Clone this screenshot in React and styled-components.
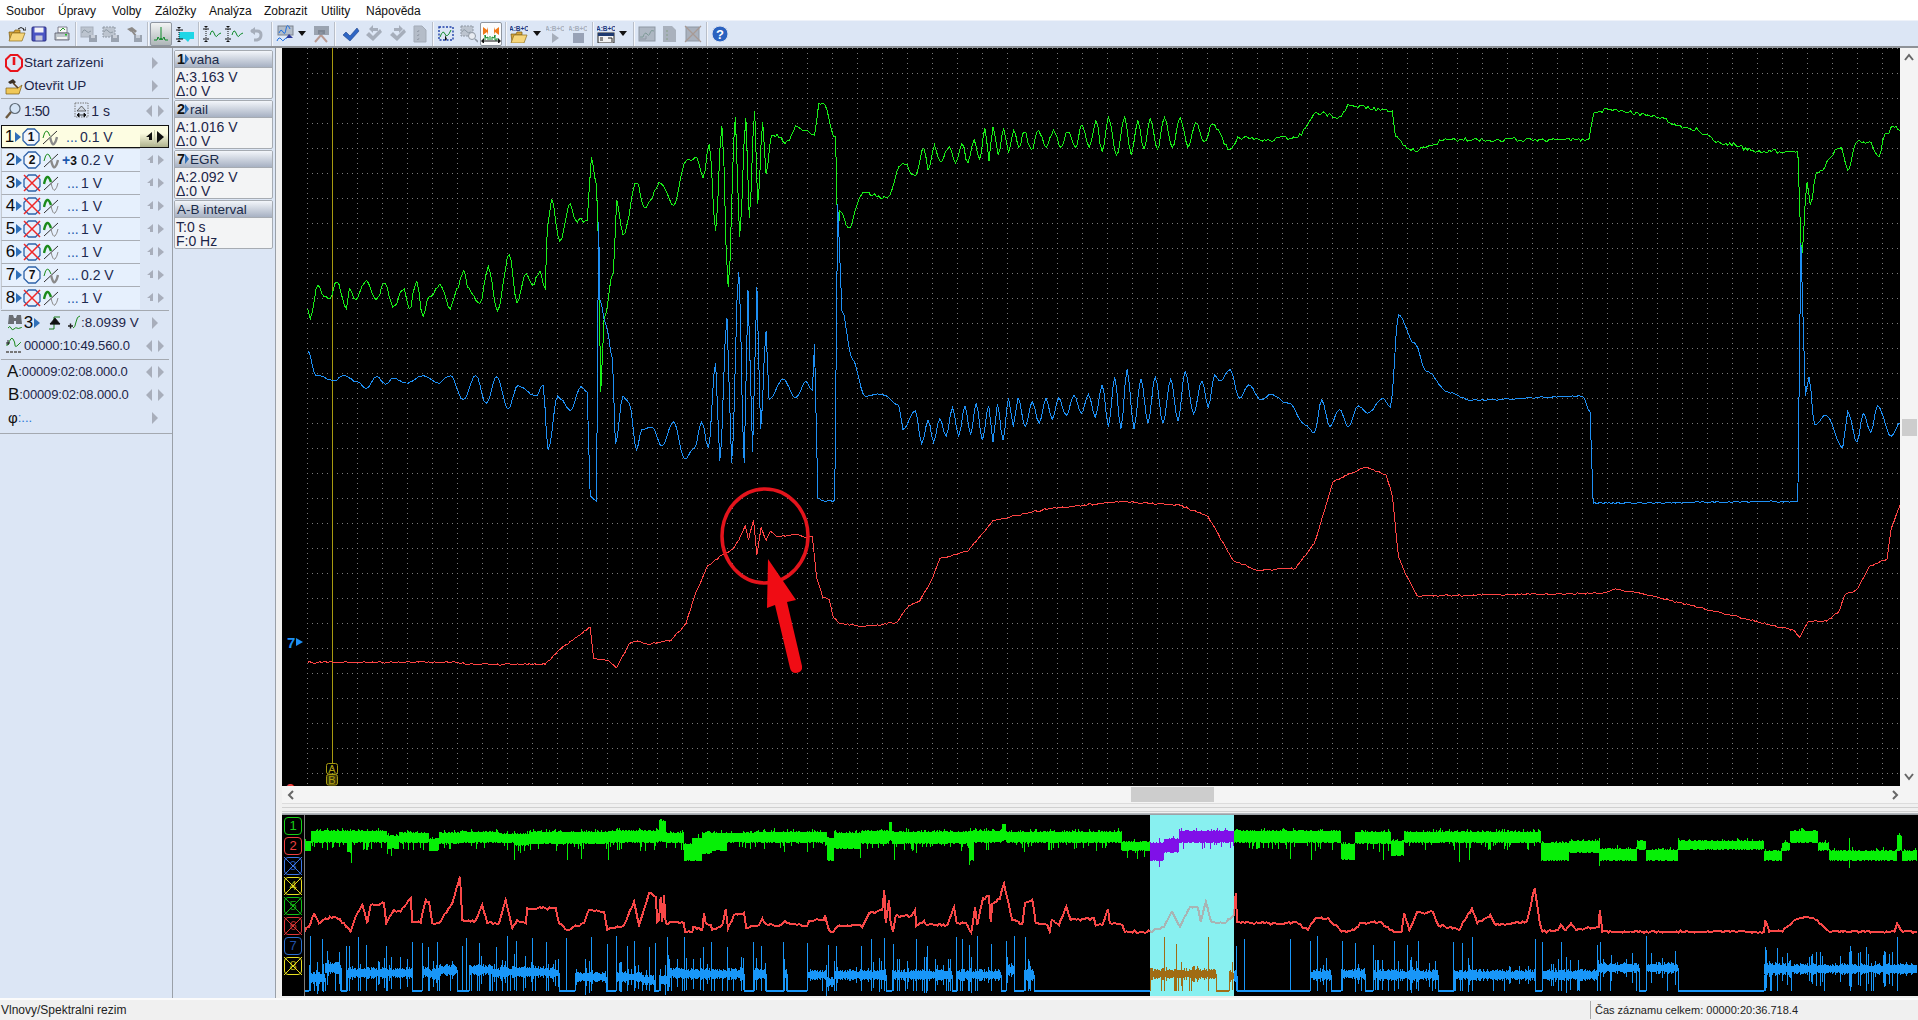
import React from 'react';
import styled, { createGlobalStyle } from 'styled-components';

const GlobalStyle = createGlobalStyle`
  html, body { margin: 0; padding: 0; height: 100%; overflow: hidden; background: #f0f0f0; }
  body { font-family: "Liberation Sans", Arial, sans-serif; color: #1c2548; }
  * { box-sizing: border-box; }
`;

const Page = styled.div`
  width: 1918px;
  height: 1020px;
  display: flex;
  flex-direction: column;
`;

const MenuBar = styled.div`
  height: 20px;
  background: white;
  display: flex;
  align-items: center;
  padding: 2px 0 0 6px;
  font-size: 12px;
  color: #111;
`;

const MenuItem = styled.span`
  width: ${p => p.$w}px;
`;

const Toolbar = styled.div`
  height: 28px;
  background: #dce6f5;
  border-bottom: 2px solid #8e9297;
  border-top: 1px solid #eef2f9;
  display: flex;
  align-items: center;
  padding-left: 5px;
`;

const ToolBtn = styled.div`
  width: ${p => p.$w}px;
  height: ${p => (p.$active ? 24 : 22)}px;
  margin-left: ${p => p.$ml || 0}px;
  flex-shrink: 0;
  display: flex;
  align-items: center;
  justify-content: center;
  border-radius: 2px;
  border: ${p => (p.$active ? '1px solid #8f96a0' : 'none')};
  background: ${p => (p.$active === 'dark' ? 'linear-gradient(#f2f4f4, #aeb6b8)' : p.$active ? '#fbfcfd' : 'transparent')};
  svg { flex-shrink: 0; }
`;

const ToolSep = styled.div`
  width: 2px;
  height: 24px;
  margin-left: ${p => p.$ml || 0}px;
  flex-shrink: 0;
  background: #b9bfc9;
  border-right: 1px solid #f5f7fb;
`;

const Main = styled.div`
  height: 950px;
  display: flex;
`;

const SidePanel = styled.div`
  width: 173px;
  flex-shrink: 0;
  background: #dce6f5;
  border-right: 1px solid #9aa0a8;
  padding-top: 3px;
  display: flex;
  flex-direction: column;
`;

const PanelRow = styled.div`
  height: 23px;
  display: flex;
  align-items: center;
  padding-left: ${p => p.$pl ?? 5}px;
  font-size: 13px;
  white-space: nowrap;
`;

const Spacer = styled.div`
  flex: 1;
`;

const Divider = styled.div`
  height: 1px;
  margin: ${p => p.$top || 0}px ${p => p.$right ?? 3}px 0 ${p => (p.$right === 0 ? 0 : 1)}px;
  background: #a4a9b0;
`;

const Label = styled.span`
  font-size: ${p => p.$size || 13}px;
  font-weight: ${p => (p.$bold ? 700 : 400)};
  color: ${p => p.$color || '#1c2548'};
  margin-left: ${p => p.$ml || 0}px;
  letter-spacing: ${p => p.$track || 0}px;
`;

const RowEnd = styled.div`
  width: 30px;
  margin-right: 2px;
  display: flex;
  justify-content: center;
  align-items: center;
`;

const ChannelList = styled.div`
  margin-top: 3px;
  display: flex;
  flex-direction: column;
`;

const ChannelRow = styled.div`
  height: 23px;
  width: 168px;
  margin-left: 1px;
  display: flex;
  align-items: stretch;
  ${p => p.$active && `
    outline: 1px solid #111;
    outline-offset: -1px;
    border: 1px solid #111;
    background: #fdfde2;
  `}
`;

const ChannelBody = styled.div`
  width: ${p => (p.$active ? 138 : 139)}px;
  display: flex;
  align-items: center;
  padding-left: ${p => (p.$active ? 2 : 3)}px;
  white-space: nowrap;
  ${p => !p.$active && `
    background: #e6f0fd;
    border-top: 1px solid #a9aeb6;
    border-left: 1px solid #c4c9d0;
  `}
`;

const ChannelButtons = styled.div`
  flex: 1;
  display: flex;
  align-items: center;
  justify-content: center;
  ${p => p.$active && `background: linear-gradient(#fbfbe0 35%, #aeb28e);`}
`;

const NumSlot = styled.span`
  width: 11px;
  font-size: 17px;
  color: #0b0b0b;
  text-align: center;
`;

const ValueSlot = styled.span`
  font-size: 14px;
  color: #1c2a50;
`;

const DotSlot = styled.span`
  width: 22px;
  padding-left: ${p => p.$pl}px;
  font-size: 14px;
  color: #1b58ae;
  white-space: nowrap;
`;

const CardPanel = styled.div`
  width: 103px;
  flex-shrink: 0;
  background: #dce6f5;
  border-right: 1px solid #9aa0a8;
  padding: 2px 2px 0 1px;
  display: flex;
  flex-direction: column;
  gap: 1px;
`;

const Card = styled.div`
  height: 49px;
  border: 1px solid #a6abb2;
  border-radius: 2px;
  background: #f3f4f5;
  overflow: hidden;
`;

const CardHeader = styled.div`
  height: 17px;
  display: flex;
  align-items: center;
  padding-left: 2px;
  font-size: 13.5px;
  color: #1b2b4a;
  background: linear-gradient(#f3f6fb, #a7b1c3);
  border-bottom: 1px solid #a6abb2;
`;

const CardBody = styled.div`
  padding: 2px 0 0 1px;
  font-size: 14px;
  line-height: 14px;
  color: #1c2548;
`;

const CardLine = styled.div`
  white-space: nowrap;
`;

const Gutter = styled.div`
  width: 6px;
  flex-shrink: 0;
  background: #f0f0f0;
`;

const RightColumn = styled.div`
  flex: 1;
  min-width: 0;
  display: flex;
  flex-direction: column;
`;

const PlotRow = styled.div`
  height: 738px;
  display: flex;
`;

const PlotSvg = styled.svg`
  display: block;
  width: 1618px;
  height: 738px;
  background: #000;
`;

const VScroll = styled.div`
  width: 18px;
  background: #f4f4f4;
  display: flex;
  flex-direction: column;
  align-items: center;
`;

const VThumb = styled.div`
  width: 15px;
  height: 17px;
  margin-top: 353px;
  background: #cdcdcd;
`;

const ScrollCap = styled.div`
  height: 18px;
  display: flex;
  align-items: center;
  justify-content: center;
  flex-shrink: 0;
`;

const HScroll = styled.div`
  height: 18px;
  background: #f4f4f4;
  display: flex;
  align-items: center;
  padding: 0 18px 0 4px;
  border-bottom: 1px solid #dcdcdc;
`;

const HThumb = styled.div`
  width: 83px;
  height: 15px;
  margin-left: 835px;
  background: #cdcdcd;
`;

const Splitter = styled.div`
  height: 11px;
  background: #f0f0f0;
  border-top: 3px solid #f0f0f0;
  &::before {
    content: '';
    display: block;
    height: 3px;
    border: 1px solid #d0d0d0;
    border-width: 1px 0;
  }
  &::after {
    content: '';
    display: block;
    height: 3px;
    margin-top: 1px;
    background: linear-gradient(#c0c4c8, #7a7e84);
  }
`;

const Overview = styled.div`
  height: 181px;
  display: flex;
  background: #000;
`;

const LabelColumn = styled.div`
  width: 23px;
  flex-shrink: 0;
  padding: 2px 0 0 2px;
  border-right: 1px solid #7c7c7c;
  display: flex;
  flex-direction: column;
  gap: 2px;
`;

const TraceLabel = styled.div`
  width: 18px;
  height: 18px;
  border: 1px solid ${p => p.$color};
  border-radius: 4px;
  color: ${p => p.$text};
  font-size: 13px;
  line-height: 16px;
  text-align: center;
  position: relative;
  svg { position: absolute; inset: -1px; }
`;

const OverviewSvg = styled.svg`
  display: block;
  width: 1612px;
  height: 181px;
`;

const StatusBar = styled.div`
  height: 22px;
  background: #f0f0f0;
  border-top: 2px solid #fbfbfb;
  display: flex;
  align-items: center;
  font-size: 12px;
  color: #222;
`;

const StatusLeft = styled.div`
  width: 1590px;
  padding-left: 1px;
`;

const StatusRight = styled.div`
  flex: 1;
  height: 18px;
  font-size: 11px;
  line-height: 18px;
  padding-left: 4px;
  border-left: 1px solid #a8a8a8;
`;

/* ---------- icons ---------- */

const Ico = ({ w = 18, h = 18, children }) => (
  <svg width={w} height={h} viewBox={`0 0 ${w} ${h}`}>{children}</svg>
);

const GRAY = '#a6aebb';
const abText = (color) => (
  <text x="9" y="6" fontSize="6.5" fontWeight="700" textAnchor="middle" fill={color} fontFamily="Liberation Sans">A:B+C</text>
);

const FolderIcon = () => (
  <g>
    <path d="M1 7h5l1-2h5v3H5L2 15z" fill="#d9a83a" stroke="#7a5a14" strokeWidth=".7" />
    <path d="M4 8h13l-3 8H1z" fill="#f6d67c" stroke="#8a6a1c" strokeWidth=".7" />
  </g>
);

const Open = () => (
  <Ico><FolderIcon /><path d="M10 4q3-3 6 0l-1 1h3V2" fill="none" stroke="#222" strokeWidth="1" /></Ico>
);
const Save = () => (
  <Ico w={16}>
    <rect x="1" y="2" width="14" height="14" rx="1" fill="#4a55c4" stroke="#2a2f80" />
    <rect x="3.5" y="2.5" width="9" height="5" fill="#f2f2f6" />
    <rect x="4.5" y="10.5" width="7" height="5" fill="#c6c8d8" />
  </Ico>
);
const Print = () => (
  <Ico>
    <path d="M5 2h9v6H5z" fill="#f8f8f8" stroke="#667" strokeWidth=".8" />
    <path d="M7 6l3-3 2 2" fill="none" stroke="#2a9a2a" />
    <path d="M2 8h14v7H2z" fill="#bfc6cc" stroke="#556" strokeWidth=".8" />
    <rect x="4" y="12" width="10" height="2" fill="#f4f4f4" />
    <rect x="12" y="9" width="2" height="1.5" fill="#22c022" />
  </Ico>
);
const GrayCopy = () => (
  <Ico>
    <rect x="1" y="2" width="12" height="10" fill="#bcc4cf" stroke={GRAY} />
    <path d="M2 8q2-5 4-2t5 0" fill="none" stroke="#8f9ba6" />
    <rect x="9" y="10" width="8" height="7" fill="#9aa3b0" />
    <rect x="11" y="10" width="4" height="3" fill="#c8ced8" />
  </Ico>
);
const GrayCopyDashed = () => (
  <Ico>
    <rect x="1" y="2" width="12" height="10" fill="#bcc4cf" stroke="#8f98a4" strokeDasharray="2 1" />
    <path d="M2 7q2-4 4-1t5 1" fill="none" stroke="#8f9ba6" />
    <rect x="9" y="10" width="8" height="7" fill="#9aa3b0" />
    <rect x="11" y="10" width="4" height="3" fill="#c8ced8" />
  </Ico>
);
const GrayHammer = () => (
  <Ico>
    <path d="M2 4l5-2 5 4-2 2-2-2-2 1z" fill="#8d8a88" />
    <path d="M7 6l4 5" stroke="#8d8a88" strokeWidth="2" />
    <rect x="9" y="10" width="8" height="7" fill="#9aa3b0" />
    <rect x="11" y="10" width="4" height="3" fill="#c8ced8" />
  </Ico>
);
const Spectrum = () => (
  <Ico>
    <path d="M9 2v13" stroke="#0e8a2a" strokeWidth="1" />
    <path d="M2 15h3l1-3 2 3 1-2 1 2 2-3 1 3h3" fill="none" stroke="#0e8a2a" />
  </Ico>
);
const CyanCursor = () => (
  <Ico w={20}>
    <rect x="4" y="7" width="15" height="7" fill="#1fd6e6" />
    <path d="M10 14l3 3 2-3" fill="#1fd6e6" />
    <path d="M1 5h7M1 14h7" stroke="#111" />
    <path d="M2 2l2 2 2-2zM2 17l2-2 2 2z" fill="#111" />
    <path d="M4 5v9" stroke="#111" strokeDasharray="1 1" />
  </Ico>
);
const CursorWave = () => (
  <Ico w={20}>
    <path d="M1 4h6M1 14h6" stroke="#111" />
    <path d="M2 1l2 2 2-2zM2 17l2-2 2 2z" fill="#111" />
    <path d="M4 4v10" stroke="#111" strokeDasharray="1 1" />
    <path d="M8 10q2-7 4-2t3 3 4-3" fill="none" stroke="#0e8a2a" />
  </Ico>
);
const Undo = () => (
  <Ico w={14}>
    <path d="M2 6h6q4 0 4 4t-4 5H5" fill="none" stroke={GRAY} strokeWidth="3" />
    <path d="M1 6l5-4v8z" fill={GRAY} />
  </Ico>
);
const ChartArrow = () => (
  <Ico>
    <rect x="2" y="1" width="15" height="9" fill="#b3bdc9" stroke="#7c8490" />
    <path d="M3 8q2-5 4-1t3-3 4 0" fill="none" stroke="#1f6fe0" />
    <path d="M1 16q2-5 4-2t3 1 3-2" fill="none" stroke="#1f6fe0" />
    <path d="M10 13l3-4 4 4z" fill="#2b3a9a" />
  </Ico>
);
const Caret = () => <Ico w={10} h={6}><path d="M1 0h8L5 5z" fill="#111" /></Ico>;
const ChartCross = () => (
  <Ico>
    <rect x="2" y="1" width="15" height="9" fill="#9aa3b0" />
    <path d="M6 5h7v4H6z" fill="#7e8794" />
    <path d="M3 17l6-7 6 7" fill="none" stroke="#b89a92" strokeWidth="2" />
    <path d="M9 10V7" stroke="#8a93a0" strokeWidth="3" />
  </Ico>
);
const Check = () => (
  <Ico>
    <path d="M1 10l3-3 4 4 7-8 2 3-9 10z" fill="#2e66c4" stroke="#1d3f86" strokeWidth=".6" />
  </Ico>
);
const CheckGray = ({ flip }) => (
  <Ico>
    <path d="M1 10l3-3 4 4 7-7 2 3-9 9z" fill={GRAY} />
    <path d={flip ? 'M5 3h5V0l4 4-4 4V6H5z' : 'M13 3H8V0L4 4l4 4V6h5z'} fill={GRAY} />
  </Ico>
);
const CheckGrayFlip = () => <CheckGray flip />;
const DocGray = () => (
  <Ico w={14}>
    <path d="M1 1h8l4 4v12H1z" fill="#b4bcc8" stroke="#a3abb7" />
    <path d="M4 6l1 1 1-2M4 10l1 1 1-2M4 14l1 1 1-2" stroke="#8e96a2" fill="none" strokeWidth=".8" />
  </Ico>
);
const DottedChart = () => (
  <Ico>
    <rect x="2" y="2" width="14" height="13" fill="none" stroke="#1e3fa8" strokeDasharray="2 1.5" strokeWidth="1.4" />
    <path d="M3 12q3-8 5-3t6-4" fill="none" stroke="#0e8a2a" />
    <path d="M8 10v6l2-2z" fill="#111" />
  </Ico>
);
const MagnifyChart = () => (
  <Ico>
    <rect x="1" y="1" width="12" height="10" fill="#bcc4cf" stroke="#8f98a4" strokeDasharray="2 1" />
    <path d="M2 7q2-4 4-1t5 1" fill="none" stroke="#8f9ba6" />
    <circle cx="12" cy="11" r="3.5" fill="#e8ecf2" stroke="#8f98a4" />
    <path d="M15 14l3 3" stroke="#8f98a4" strokeWidth="1.6" />
  </Ico>
);
const OrangeSpectrum = () => (
  <Ico w={20}>
    <path d="M2 2l4 3 1-3v8l-1-3-4 3zM18 2l-4 3-1-3v8l1-3 4 3z" fill="#f07818" />
    <path d="M4 15V10l1 3 2-1v3M9 15v-4M11 15v-3l2 1 1-3v5h2v-2" fill="none" stroke="#0e8a2a" />
    <path d="M2 16h16" stroke="#111" />
    <path d="M0 16l3-3v6zM20 16l-3-3v6z" fill="#111" />
  </Ico>
);
const AbFolder = () => (
  <Ico>
    {abText('#1e3a80')}
    <g transform="translate(0 2)"><FolderIcon /></g>
  </Ico>
);
const AbPlay = () => (
  <Ico>{abText(GRAY)}<path d="M6 8l7 5-7 5z" fill={GRAY} /></Ico>
);
const AbStop = () => (
  <Ico>{abText(GRAY)}<rect x="4" y="8" width="11" height="10" fill="#98a2b6" /></Ico>
);
const AbWindow = () => (
  <Ico>
    {abText('#1e3a80')}
    <rect x="1" y="8" width="16" height="10" fill="#f3f3f3" stroke="#222" />
    <rect x="1" y="8" width="16" height="3" fill="#1e3a70" />
    <path d="M3 13h3M3 15h3M11 13h4v4" stroke="#222" fill="none" />
  </Ico>
);
const GrayChart = () => (
  <Ico>
    <rect x="1" y="2" width="16" height="14" fill="#aeb7c3" stroke="#8e97a3" />
    <path d="M2 12h3q2-6 4-3t3-1 4-2" fill="none" stroke="#7f9a98" />
    <path d="M2 14h6v-3" fill="none" stroke="#8e97a3" />
  </Ico>
);
const GrayDoc = () => (
  <Ico w={14}>
    <path d="M0 1h9l4 4v12H0z" fill="#a9b1bd" />
    <path d="M4 5v2M4 9v2M4 13v2" stroke="#87a088" strokeWidth="1" />
  </Ico>
);
const GrayX = () => (
  <Ico>
    <rect x="2" y="2" width="13" height="14" fill="#a9b1bd" stroke="#8e97a3" />
    <path d="M1 1l16 16M17 1L1 17" stroke="#a89a94" strokeWidth="1.2" />
  </Ico>
);
const Help = () => (
  <Ico>
    <circle cx="9" cy="9" r="8" fill="#2a62c0" stroke="#d8e0ee" />
    <text x="9" y="13.5" fontSize="13" fontWeight="700" textAnchor="middle" fill="white" fontFamily="Liberation Sans">?</text>
  </Ico>
);

const Power = () => (
  <Ico>
    <path d="M5.5 1h7L17 5.5v7L12.5 17h-7L1 12.5v-7z" fill="none" stroke="#e8141c" strokeWidth="2" />
    <path d="M9 3v8" stroke="#e8141c" strokeWidth="2.6" />
  </Ico>
);
const HammerFolder = () => (
  <Ico>
    <path d="M1 11h12l4-3-3 9H1z" fill="#f0c858" stroke="#7a5a14" strokeWidth=".7" />
    <path d="M3 5l5-3 3 3-2 2-1-1-3 1z" fill="#3a3026" />
    <path d="M8 6l5 5" stroke="#5a4020" strokeWidth="1.6" />
  </Ico>
);
const Magnifier = () => (
  <Ico>
    <circle cx="11" cy="6.5" r="5" fill="#d4e4f6" stroke="#5f6b78" strokeWidth="1.2" />
    <path d="M7 10l-5 6" stroke="#6d5a40" strokeWidth="2.4" />
  </Ico>
);
const ZoomWidth = () => (
  <Ico w={16}>
    <rect x="1" y="1" width="13" height="14" fill="none" stroke="#777" strokeDasharray="1.5 1" />
    <path d="M3 9h9L7.5 4z" fill="#cfd6df" stroke="#333" strokeWidth=".7" />
    <path d="M3 13h9M3 13l2-2v4zM12 13l-2-2v4z" stroke="#111" fill="#111" strokeWidth=".8" />
  </Ico>
);
const Play = ({ color = '#2f6fb8', s = 7 }) => (
  <Ico w={s} h={10}>
    <path d={`M0 0l${s - 1} 5-${s - 1} 5z`} fill={color} />
  </Ico>
);
const ChevronArrow = ({ color = '#a8aebb' }) => (
  <Ico w={7} h={12}><path d="M0 0l6 6-6 6z" fill={color} /></Ico>
);
const NavArrows = ({ color = '#a8aebb' }) => (
  <Ico w={20} h={12}>
    <path d="M7 0L1 6l6 6zM13 0l6 6-6 6z" fill={color} />
  </Ico>
);
const ChannelNav = ({ active }) => {
  const c = active ? '#111' : '#a8aebb';
  return (
    <Ico w={22} h={14}>
      <path d="M9 2L3 7l3 0v3h3z" fill={c} />
      <path d={active ? 'M14 1l7 6-7 6z' : 'M14 2l6 5-6 5z'} fill={c} />
      {active && <path d="M11.5 0v14" stroke="#c8ccb0" />}
    </Ico>
  );
};
const Octagon = ({ n, off }) => (
  <Ico>
    <path d="M5.5 1h7L17 5.5v7L12.5 17h-7L1 12.5v-7z" fill={off ? 'none' : '#f2f6fc'} stroke="#2e62a8" strokeWidth="1.3" />
    {off ? (
      <path d="M1 1l16 16M17 1L1 17" stroke="#f02828" strokeWidth="1.5" />
    ) : (
      <text x="9" y="13.2" fontSize="12" fontWeight="700" textAnchor="middle" fill="#111" fontFamily="Liberation Sans">{n}</text>
    )}
  </Ico>
);
const WaveToggle = ({ off }) => (
  <Ico w={16}>
    <path d="M1 16L15 3" stroke="#333" strokeWidth="1" />
    <path d="M1 10Q4-3 8 8" fill="none" stroke="#1a8a1a" strokeWidth={off ? 2.4 : 1} />
    <path d="M8 9q2 9 4 7t3-7" fill="none" stroke="#8a8a8a" strokeWidth={off ? 1 : 2.4} />
  </Ico>
);
const Binoculars = () => (
  <Ico w={16} h={20}>
    <path d="M2 2h4l1 3h2l1-3h4l1 9H9V8H7v3H1z" fill="#6a6e74" />
    <path d="M1 15q2-3 3 0t3 1 3-1 3 0 2 0" fill="none" stroke="#1a8a1a" />
  </Ico>
);
const TriggerEdge = () => (
  <Ico w={14} h={16}>
    <path d="M1 14h5V2h6" fill="none" stroke="#1a7a1a" />
    <path d="M2 9h10M7 3L2 9h10z" fill="#111" stroke="#111" strokeWidth=".8" />
  </Ico>
);
const SlopeIcon = () => (
  <Ico w={14} h={16}>
    <path d="M1 11h5M3.5 8.5v5" stroke="#222" strokeWidth="1.4" />
    <path d="M6 13q2 0 3-6t4-6" fill="none" stroke="#1a8a1a" />
  </Ico>
);
const PulseIcon = () => (
  <Ico w={18} h={20}>
    <path d="M1 9h2q3-9 5-6t2 6 3 0 3-3" fill="none" stroke="#1a8a1a" />
    <path d="M3 4v5M1 7h4" stroke="#222" />
    <path d="M1 16h16" stroke="#777" strokeWidth="2" strokeDasharray="3 1" />
  </Ico>
);

/* ---------- trace data, in page pixels ---------- */

const random = (seed) => () => {
  seed = (seed * 16807) % 2147483647;
  return seed / 2147483647;
};

const leftPlot = ([x, y]) => [280 + x / 2.376, 100 + y / 2.703];
const rightPlot = ([x, y]) => [940 + x / 1.603, 90 + y / 2.613];
const ovA = ([x, y]) => [270 + x / 3, 760 + y / 3];
const ovB = ([x, y]) => [660 + x / 3, 810 + y / 3];
const ovC = ([x, y]) => [1100 + x / 1.917, 780 + y / 3];

// alternates peak and trough rows into one zig-zag
const zigzag = (xs, peaks, troughs) => {
  const out = [];
  xs.forEach((x, i) => {
    out.push([x, peaks[i]]);
    if (i < xs.length - 1) out.push([(x + xs[i + 1]) / 2, troughs[i]]);
  });
  return out;
};

const greenLeft = [[66, 565], [72, 592], [90, 500], [100, 525], [118, 538], [135, 492], [158, 565], [165, 510], [180, 540], [205, 488], [228, 540], [250, 495], [268, 560], [295, 510], [307, 565], [325, 490], [340, 585], [355, 530], [380, 497], [405, 565], [420, 510], [437, 460], [445, 505], [475, 550], [495, 450], [517, 570], [545, 418], [563, 548], [585, 470], [600, 500], [618, 462], [630, 508], [635, 350], [645, 268], [665, 382], [690, 280], [702, 325], [730, 325], [740, 155], [752, 230], [757, 400], [762, 790], [770, 590], [792, 470], [800, 270], [815, 365], [848, 225], [865, 290], [905, 225], [935, 285], [965, 165], [990, 155], [1005, 210], [1020, 120], [1035, 355], [1050, 70], [1065, 505], [1082, 45], [1092, 370], [1107, 50], [1115, 320], [1128, 30], [1135, 280], [1147, 60], [1155, 200], [1168, 95], [1190, 100], [1200, 118], [1230, 72], [1270, 95], [1280, 10], [1290, 8], [1320, 100], [1325, 370], [1330, 300], [1350, 345], [1385, 250], [1440, 265], [1480, 170], [1510, 205], [1530, 130], [1540, 190], [1555, 122], [1568, 165]];
const greenRight = [
  ...zigzag(
    [15, 35, 55, 72, 85, 102, 118, 135, 158, 182, 205, 228, 250, 270, 296, 317, 337, 360, 385, 410, 437],
    [148, 140, 130, 100, 98, 100, 105, 110, 105, 105, 110, 92, 80, 72, 70, 78, 75, 72, 72, 85, 90],
    [190, 190, 180, 185, 170, 165, 150, 155, 150, 150, 150, 150, 160, 170, 170, 155, 155, 150, 150, 135],
  ),
  [465, 155], [480, 125], [520, 130], [570, 125], [605, 60], [640, 70], [657, 40], [725, 55], [730, 120], [755, 158], [820, 130], [1040, 130], [1048, 60], [1075, 50], [1135, 65], [1200, 100], [1260, 140], [1310, 160], [1375, 160], [1378, 300], [1381, 440], [1390, 240], [1395, 300], [1405, 215], [1445, 150], [1455, 210], [1470, 135], [1490, 135], [1505, 175], [1515, 115], [1530, 97], [1539, 105],
];
const blueLeft = [[66, 678], [85, 745], [130, 758], [150, 745], [185, 762], [205, 780], [230, 748], [250, 768], [270, 752], [300, 765], [340, 745], [375, 765], [405, 745], [435, 810], [465, 745], [490, 820], [515, 748], [542, 835], [565, 772], [610, 800], [625, 770], [637, 945], [660, 800], [668, 810], [690, 840], [715, 775], [730, 790], [737, 1070], [752, 1085], [757, 330], [760, 540], [775, 610], [790, 700], [797, 930], [815, 800], [830, 820], [847, 945], [860, 890], [885, 885], [907, 935], [935, 870], [962, 970], [985, 940], [1002, 870], [1018, 940], [1035, 710], [1045, 975], [1062, 590], [1073, 980], [1090, 465], [1103, 980], [1112, 515], [1123, 950], [1133, 505], [1142, 890], [1155, 625], [1162, 810], [1195, 755], [1225, 805], [1250, 760], [1265, 785], [1270, 660], [1278, 1075], [1290, 1083], [1318, 1083], [1325, 280], [1335, 570], [1360, 700], [1390, 800], [1430, 795], [1470, 825], [1480, 890], [1510, 840], [1525, 930], [1540, 865], [1553, 925], [1568, 860]];
const blueRight = [
  [0, 860], [10, 905],
  ...zigzag(
    [20, 40, 58, 78, 92, 110, 125, 148, 170, 190, 215, 238, 260, 280, 300, 322, 345, 370, 393, 420, 440],
    [830, 825, 818, 825, 820, 805, 805, 815, 805, 805, 798, 795, 770, 750, 730, 755, 750, 755, 735, 760, 745],
    [905, 900, 915, 920, 915, 880, 880, 870, 860, 850, 845, 855, 880, 885, 885, 870, 870, 865, 845, 830],
  ),
  [450, 760], [465, 730], [480, 805], [495, 770], [515, 810], [530, 795], [560, 820], [585, 875], [600, 895], [612, 810], [625, 880], [640, 835], [655, 880], [670, 825], [685, 845], [710, 805], [722, 830], [735, 587], [760, 660], [780, 735], [815, 790], [850, 810], [1030, 800], [1042, 840], [1047, 1080], [1375, 1075], [1380, 400], [1387, 800], [1393, 750], [1402, 875], [1420, 850], [1447, 935], [1455, 840], [1470, 920], [1480, 845], [1492, 895], [1503, 825], [1525, 905], [1539, 870],
];
const redLeft = [[66, 1520], [420, 1520], [450, 1525], [630, 1525], [660, 1490], [700, 1455], [737, 1425], [745, 1510], [780, 1515], [800, 1535], [830, 1470], [850, 1462], [875, 1472], [930, 1460], [965, 1415], [985, 1340], [1015, 1260], [1050, 1230], [1075, 1215], [1090, 1190], [1105, 1150], [1113, 1190], [1125, 1135], [1133, 1230], [1143, 1155], [1155, 1190], [1165, 1165], [1180, 1180], [1225, 1175], [1250, 1182], [1265, 1180], [1275, 1290], [1290, 1345], [1305, 1350], [1315, 1400], [1330, 1415], [1390, 1423], [1465, 1412], [1495, 1365], [1520, 1355], [1545, 1305], [1568, 1240]];
const redRight = [[0, 1225], [45, 1205], [85, 1125], [170, 1095], [290, 1075], [385, 1085], [430, 1115], [470, 1230], [510, 1255], [570, 1250], [600, 1185], [630, 1025], [680, 985], [715, 1005], [725, 1060], [735, 1220], [745, 1260], [765, 1322], [1060, 1315], [1080, 1305], [1110, 1310], [1370, 1413], [1378, 1430], [1392, 1388], [1422, 1388], [1442, 1360], [1450, 1320], [1470, 1305], [1490, 1245], [1518, 1225], [1525, 1145], [1539, 1085]];

// fills a key point list in with short steps and a bit of signal noise
const traceLine = (points, { noise, seed, step = 2, smooth }) => {
  const rnd = random(seed);
  let d = `M${points[0][0].toFixed(1)} ${points[0][1].toFixed(1)}`;
  for (let i = 1; i < points.length; i++) {
    const [x0, y0] = points[i - 1];
    const [x1, y1] = points[i];
    const n = Math.max(1, Math.round((x1 - x0) / step));
    for (let k = 1; k <= n; k++) {
      const t = k / n;
      const e = smooth ? (1 - Math.cos(t * Math.PI)) / 2 : t;
      const jitter = k < n ? (rnd() - 0.5) * noise : 0;
      d += `L${(x0 + (x1 - x0) * t).toFixed(1)} ${(y0 + (y1 - y0) * e + jitter).toFixed(1)}`;
    }
  }
  return d;
};

const greenPlot = traceLine([...greenLeft.map(leftPlot), ...greenRight.map(rightPlot)], { noise: 4, seed: 11, smooth: true });
const bluePlot = traceLine([...blueLeft.map(leftPlot), ...blueRight.map(rightPlot)], { noise: 1.4, seed: 23, smooth: true });
const redPlot = traceLine([...redLeft.map(leftPlot), ...redRight.map(rightPlot)], { noise: 1.6, seed: 37 });

const greenSegs = [
  [306, 312, 840, 850], [312, 348, 830, 842], [348, 353, 830, 852], [353, 388, 830, 842], [388, 400, 835, 848], [400, 430, 832, 842], [430, 440, 838, 850], [440, 462, 832, 843], [462, 500, 831, 842], [500, 515, 833, 842], [515, 530, 833, 845], [530, 610, 831, 843], [610, 660, 830, 842],
  [660, 667, 820, 841], [667, 685, 832, 842], [685, 693, 843, 860], [693, 703, 837, 860], [703, 713, 832, 853], [713, 728, 832, 850], [728, 757, 832, 842], [757, 828, 831, 842], [828, 835, 837, 860], [835, 862, 832, 848], [862, 890, 830, 843], [890, 893, 822, 840], [893, 970, 831, 843], [970, 975, 830, 860], [975, 1003, 830, 842], [1003, 1007, 823, 840], [1007, 1123, 831, 842], [1123, 1151, 841, 850],
  [1151, 1165, 842, 860], [1165, 1180, 838, 852], [1180, 1342, 830, 842], [1342, 1356, 843, 859], [1356, 1392, 831, 843], [1392, 1405, 840, 855], [1405, 1542, 831, 842], [1542, 1570, 842, 860], [1570, 1600, 840, 852], [1600, 1638, 848, 860], [1638, 1647, 840, 849], [1647, 1679, 849, 860], [1679, 1765, 840, 849], [1765, 1783, 850, 860], [1783, 1791, 842, 850], [1791, 1819, 830, 842], [1819, 1830, 842, 850], [1830, 1898, 850, 860], [1898, 1903, 835, 850], [1903, 1918, 850, 860],
];
const greenSpikes = [[352, 863], [323, 848], [367, 850], [388, 851], [424, 850], [515, 860], [568, 860], [582, 859], [609, 860], [785, 852], [808, 852], [861, 858], [895, 860], [917, 853], [970, 865], [1025, 852], [1050, 850], [1160, 867], [1291, 859], [1312, 860], [1384, 860], [1380, 852], [1460, 862], [1470, 860], [1600, 866], [1850, 868]];

const bandColumns = (segs, spikes, seed) => {
  const rnd = random(seed);
  let d = '';
  segs.forEach(([x0, x1, top, bot]) => {
    for (let x = x0; x < x1; x++) {
      const drop = rnd() > 0.82 && x < 1545 && bot - top < 14 ? 1 + rnd() * 7 : 0;
      const rise = rnd() > 0.8 ? rnd() * 3 : 0;
      const t = Math.round(top + rnd() * 1.5 - rise);
      const b = Math.round(bot + rnd() * 1.5 + drop);
      d += `M${x}.5 ${t}V${b}`;
    }
  });
  spikes.forEach(([x, y]) => { d += `M${x}.5 838V${y}`; });
  return d;
};
const greenOverview = bandColumns(greenSegs, greenSpikes, 7);

const redA = [[106, 515], [125, 490], [135, 462], [150, 490], [170, 475], [200, 472], [225, 490], [245, 515], [260, 470], [280, 435], [295, 490], [305, 435], [345, 430], [352, 490], [375, 450], [395, 455], [425, 415], [430, 485], [455, 488], [470, 420], [480, 425], [490, 490], [510, 490], [550, 430], [573, 350], [580, 480], [605, 485], [620, 480], [640, 435], [655, 490], [690, 490], [710, 420], [730, 505], [745, 480], [770, 490], [775, 445], [860, 445], [870, 490], [895, 510], [945, 490], [960, 450], [1005, 455], [1015, 510], [1065, 495], [1095, 425], [1110, 495], [1140, 400], [1160, 410], [1165, 485]];
const redB = [[0, 330], [5, 260], [10, 335], [15, 255], [20, 340], [50, 335], [75, 340], [78, 365], [100, 365], [103, 350], [130, 360], [135, 310], [140, 340], [155, 345], [160, 360], [190, 345], [200, 298], [207, 355], [225, 315], [255, 308], [262, 355], [300, 345], [310, 325], [320, 343], [365, 345], [378, 332], [395, 343], [445, 347], [450, 333], [495, 330], [498, 315], [510, 360], [520, 367], [535, 350], [600, 345], [610, 352], [630, 310], [670, 300], [676, 240], [680, 340], [690, 270], [695, 340], [702, 365], [710, 318], [755, 318], [768, 300], [772, 348], [795, 332], [800, 343], [865, 345], [885, 292], [893, 340], [920, 338], [937, 368], [948, 292], [955, 345], [972, 265], [990, 258], [995, 335], [1000, 282], [1022, 268], [1035, 220], [1060, 330], [1090, 343], [1098, 280], [1120, 268], [1130, 340], [1165, 345], [1172, 365], [1178, 330], [1200, 345], [1222, 290], [1235, 330], [1305, 325], [1310, 347], [1330, 345], [1347, 297], [1352, 338], [1390, 345], [1397, 365], [1475, 365]];
const redC = [[125, 440], [140, 395], [155, 440], [175, 380], [190, 385], [195, 425], [205, 365], [215, 425], [240, 430], [259, 405], [262, 340], [265, 425], [290, 430], [360, 430], [375, 425], [400, 450], [415, 415], [440, 415], [465, 455], [490, 450], [500, 430], [540, 425], [550, 440], [565, 455], [580, 455], [585, 400], [595, 450], [610, 395], [620, 400], [640, 395], [650, 435], [690, 450], [715, 385], [725, 430], [750, 405], [760, 435], [820, 425], [835, 325], [845, 430], [850, 455], [880, 450], [885, 435], [895, 450], [905, 430], [915, 450], [958, 440], [960, 390], [965, 455], [1275, 455], [1277, 420], [1285, 455], [1310, 455], [1330, 425], [1350, 413], [1370, 415], [1400, 455], [1525, 455], [1530, 430], [1540, 455], [1568, 455]];
const redOverview = traceLine([...redA.map(ovA), ...redB.map(ovB), ...redC.map(ovC)], { noise: 2.5, seed: 53 });

// [from, to, centre line]; null is the idle line at the bottom
const blueRuns = [
  [306, 310, null], [310, 326, 978], [326, 342, 968], [342, 348, null], [348, 413, 973], [413, 423, null], [423, 430, 972], [430, 440, 974], [440, 458, 970], [458, 470, null], [470, 493, 970], [493, 503, 973], [503, 547, 972], [547, 560, 973], [560, 576, null], [576, 607, 977], [607, 617, null], [617, 643, 977], [643, 655, 980], [655, 660, null], [660, 668, 980],
  [668, 683, 973], [683, 745, 974], [745, 755, null], [755, 767, 974], [767, 785, null], [785, 788, 974], [788, 808, null], [808, 827, 975], [827, 835, 982], [835, 862, 975], [862, 887, 975], [887, 893, null], [893, 953, 975], [953, 958, null], [958, 1002, 975], [1002, 1007, null], [1007, 1015, 970], [1015, 1025, null], [1025, 1035, 975], [1035, 1151, null],
  [1151, 1217, 974], [1217, 1230, null], [1230, 1238, 976], [1238, 1311, null], [1311, 1332, 975], [1332, 1342, null], [1342, 1366, 974], [1366, 1374, null], [1374, 1439, 975], [1439, 1455, null], [1455, 1536, 975], [1536, 1543, null], [1543, 1598, 975], [1598, 1640, 968], [1640, 1647, null], [1647, 1679, 968], [1679, 1765, null], [1765, 1918, 969],
];

const blueSpikes = [
  ...[122, 160, 232, 240, 267, 290, 350, 430, 458, 478, 505, 578, 592, 630, 680, 715, 740, 790, 830, 892, 965, 1015, 1040, 1075, 1095, 1140, 1158].map(x => 270 + x / 3),
  ...[25, 75, 133, 157, 203, 283, 305, 373, 445, 508, 530, 607, 635, 675, 702, 772, 803, 892, 910, 930, 955, 995, 1040, 1065, 1098].map(x => 660 + x / 3),
  ...[125, 148, 208, 262, 278, 367, 405, 418, 465, 490, 525, 565, 590, 612, 678, 695, 715, 835, 850, 885, 955, 960, 1048, 1277, 1300, 1440, 1470, 1530].map(x => 1100 + x / 1.917),
].map(Math.round);

const blueColumns = () => {
  const rnd = random(91);
  let d = '';
  blueRuns.forEach(([x0, x1, mid]) => {
    for (let x = x0; x < x1; x++) {
      if (mid === null) {
        d += `M${x}.5 990V992`;
        continue;
      }
      const reach = 3 + rnd() * 3 + (rnd() > 0.8 ? rnd() * 13 : 0);
      d += `M${x}.5 ${(mid - reach).toFixed(0)}V${(mid + reach).toFixed(0)}`;
      if (rnd() > 0.94) d += `M${x}.5 ${mid}V991`;
    }
    d += `M${x1}.5 ${mid === null ? 975 : mid}V991`;
  });
  const spikeRnd = random(17);
  blueSpikes.forEach((x) => {
    d += `M${x}.5 ${936 + Math.round(spikeRnd() * 12)}V991`;
  });
  return d;
};
const blueOverview = blueColumns();

/* ---------- page data ---------- */

const menu = [['Soubor', 52], ['Úpravy', 54], ['Volby', 43], ['Záložky', 54], ['Analýza', 55], ['Zobrazit', 57], ['Utility', 45], ['Nápověda', 80]];

const tools = [
  [Open, 24], [Save, 20], [Print, 26], 0,
  [GrayCopy, 24], [GrayCopyDashed, 20], [GrayHammer, 26], 0,
  [Spectrum, 22, 1, 'dark'], [CyanCursor, 26], 0,
  [CursorWave, 24], [CursorWave, 20], [Undo, 24], 3,
  [ChartArrow, 24], [Caret, 10], [ChartCross, 27], 0,
  [Check, 30], [CheckGray, 16], [CheckGrayFlip, 32], [DocGray, 11], 7,
  [DottedChart, 23], [MagnifyChart, 23], [OrangeSpectrum, 22, 0, true], 3,
  [AbFolder, 24], [Caret, 11], [AbPlay, 26], [AbStop, 20], 4,
  [AbWindow, 23], [Caret, 12], 4,
  [GrayChart, 23], [GrayDoc, 23], [GrayX, 24], 1,
  [Help, 24],
];

const channels = [
  { n: 1, value: '0.1 V', active: true },
  { n: 2, value: '0.2 V', offset: true },
  { n: 3, value: '1 V', off: true },
  { n: 4, value: '1 V', off: true },
  { n: 5, value: '1 V', off: true },
  { n: 6, value: '1 V', off: true },
  { n: 7, value: '0.2 V' },
  { n: 8, value: '1 V', off: true },
];

const cards = [
  { id: '1', name: 'vaha', lines: ['A:3.163 V', 'Δ:0 V'] },
  { id: '2', name: 'rail', lines: ['A:1.016 V', 'Δ:0 V'] },
  { id: '7', name: 'EGR', lines: ['A:2.092 V', 'Δ:0 V'] },
  { title: 'A-B interval', lines: ['T:0 s', 'F:0 Hz'] },
];

const traceLabels = [
  { n: 1, color: '#16d016', text: '#16d016' },
  { n: 2, color: '#f04040', text: '#f04040' },
  { n: 3, color: '#3c78e8', text: '#2050a8', off: true },
  { n: 4, color: '#e8e020', text: '#a8a010', off: true },
  { n: 5, color: '#16c016', text: '#109010', off: true },
  { n: 6, color: '#e03838', text: '#a02828', off: true },
  { n: 7, color: '#2a70d0', text: '#2050a8' },
  { n: 8, color: '#e8e020', text: '#a8a010', off: true },
];

const App = () => (
  <Page>
    <GlobalStyle />
    <MenuBar>
      {menu.map(([label, w]) => <MenuItem key={label} $w={w}>{label}</MenuItem>)}
    </MenuBar>

    <Toolbar>
      {tools.map((t, i) => {
        if (typeof t === 'number') return <ToolSep key={i} $ml={t} />;
        const [Icon, w, ml, active] = t;
        return <ToolBtn key={i} $w={w} $ml={ml} $active={active}><Icon /></ToolBtn>;
      })}
    </Toolbar>

    <Main>
      <SidePanel>
        <PanelRow>
          <Power /><Label $ml={1} $size={13.5}>Start zařízeni</Label><Spacer />
          <RowEnd><ChevronArrow /></RowEnd>
        </PanelRow>
        <PanelRow>
          <HammerFolder /><Label $ml={1} $size={13.5}>Otevřit UP</Label><Spacer />
          <RowEnd><ChevronArrow /></RowEnd>
        </PanelRow>
        <Divider $top={1} />
        <PanelRow $pl={4}>
          <Magnifier /><Label $ml={2} $size={14} $track={-0.5}>1:50</Label>
          <Spacer />
          <ZoomWidth /><Label $ml={1} $size={14}>1 s</Label>
          <Label $ml={30} />
          <RowEnd><NavArrows /></RowEnd>
        </PanelRow>

        <ChannelList>
          {channels.map((c) => (
            <ChannelRow key={c.n} $active={c.active}>
              <ChannelBody $active={c.active}>
                <NumSlot>{c.n}</NumSlot>
                <Play />
                <Octagon n={c.n} off={c.off} />
                <Label $ml={2} />
                <WaveToggle off={c.off} />
                {c.offset ? (
                  <DotSlot $pl={3}><Label $color="#1b58ae" $bold $size={14}>+</Label><Label $color="#111" $size={12} $bold>3</Label></DotSlot>
                ) : (
                  <DotSlot $pl={8}>...</DotSlot>
                )}
                <ValueSlot>{c.value}</ValueSlot>
              </ChannelBody>
              <ChannelButtons $active={c.active}><ChannelNav active={c.active} /></ChannelButtons>
            </ChannelRow>
          ))}
        </ChannelList>
        <Divider $top={1} />

        <PanelRow $pl={7}>
          <Binoculars />
          <NumSlot>3</NumSlot><Play />
          <Label $ml={7} /><TriggerEdge />
          <Label $ml={5} /><SlopeIcon />
          <Label $size={13.5}>:8.0939 V</Label>
          <Spacer />
          <RowEnd><ChevronArrow /></RowEnd>
        </PanelRow>
        <PanelRow>
          <PulseIcon /><Label $ml={1} $track={-0.15}>00000:10:49.560.0</Label><Spacer />
          <RowEnd><NavArrows /></RowEnd>
        </PanelRow>
        <Divider $top={2} />
        <PanelRow $pl={7}>
          <Label $size={17} $color="#111">A</Label><Label $track={-0.15}>:00009:02:08.000.0</Label><Spacer />
          <RowEnd><NavArrows /></RowEnd>
        </PanelRow>
        <PanelRow $pl={8}>
          <Label $size={17} $color="#111">B</Label><Label $track={-0.15}>:00009:02:08.000.0</Label><Spacer />
          <RowEnd><NavArrows /></RowEnd>
        </PanelRow>
        <PanelRow $pl={8}>
          <Label $size={15} $color="#111">φ</Label><Label $color="#2a78d8">:...</Label><Spacer />
          <RowEnd><ChevronArrow /></RowEnd>
        </PanelRow>
        <Divider $top={4} $right={0} />
      </SidePanel>

      <CardPanel>
        {cards.map((c) => (
          <Card key={c.id || c.title}>
            <CardHeader>
              {c.title || (
                <>
                  <Label $size={14.5} $bold $color="#111">{c.id}</Label>
                  <Play s={5} />
                  {c.name}
                </>
              )}
            </CardHeader>
            <CardBody>
              {c.lines.map((l) => <CardLine key={l}>{l}</CardLine>)}
            </CardBody>
          </Card>
        ))}
      </CardPanel>

      <Gutter />

      <RightColumn>
        <PlotRow>
          <PlotSvg viewBox="282 48 1618 738">
            <defs>
              <pattern id="grid" x="307" y="73" width="25" height="25" patternUnits="userSpaceOnUse">
                {[0, 5, 10, 15, 20].map((o) => (
                  <React.Fragment key={o}>
                    <rect x={o} y="0" width="1" height="1" fill="#7c7c7c" />
                    <rect x="0" y={o} width="1" height="1" fill="#7c7c7c" />
                  </React.Fragment>
                ))}
              </pattern>
            </defs>
            <rect x="307" y="48" width="1593" height="738" fill="url(#grid)" />
            <path d="M332.5 48V763" stroke="#a89a10" />
            <g fill="none" strokeWidth="1" shapeRendering="crispEdges">
              <path d={greenPlot} stroke="#18f018" />
              <path d={bluePlot} stroke="#1e90f5" />
              <path d={redPlot} stroke="#ff4444" />
            </g>
            <ellipse cx="765" cy="536" rx="43" ry="47" fill="none" stroke="#e4141c" strokeWidth="3.5" />
            <path d="M768 559L796 600L787 602L802 666Q803 672 796 673Q791 673 790 668L775 605L767 608Z" fill="#f00c14" />
            <text x="287" y="648" fontSize="15" fontWeight="700" fill="#1e90f5" fontFamily="Liberation Sans">7</text>
            <path d="M296 638l7 4-7 4z" fill="#1e90f5" />
            <g fontFamily="Liberation Sans" fontSize="11" fill="#b0a010" textAnchor="middle">
              <rect x="326.5" y="763.5" width="11" height="10.5" rx="2" fill="none" stroke="#a89a10" />
              <text x="332" y="773">A</text>
              <rect x="326.5" y="774.5" width="11" height="10.5" rx="2" fill="#3c3808" stroke="#a89a10" />
              <text x="332" y="784">B</text>
            </g>
            <text x="286" y="794" fontSize="15" fontWeight="700" fill="#f04040" fontFamily="Liberation Sans">2</text>
          </PlotSvg>
          <VScroll>
            <ScrollCap>
              <Ico w={10} h={8}><path d="M1 7l4-5 4 5" fill="none" stroke="#666" strokeWidth="2" /></Ico>
            </ScrollCap>
            <VThumb />
            <Spacer />
            <ScrollCap>
              <Ico w={10} h={8}><path d="M1 1l4 5 4-5" fill="none" stroke="#666" strokeWidth="2" /></Ico>
            </ScrollCap>
          </VScroll>
        </PlotRow>
        <HScroll>
          <Ico w={10} h={10}><path d="M7 1L3 5l4 4" fill="none" stroke="#666" strokeWidth="2" /></Ico>
          <HThumb />
          <Spacer />
          <Ico w={10} h={10}><path d="M3 1l4 4-4 4" fill="none" stroke="#666" strokeWidth="2" /></Ico>
        </HScroll>
        <Splitter />
        <Overview>
          <LabelColumn>
            {traceLabels.map((l) => (
              <TraceLabel key={l.n} $color={l.color} $text={l.text}>
                {l.n}
                {l.off && (
                  <Ico><path d="M0 0l18 18M18 0L0 18" stroke={l.color} /></Ico>
                )}
              </TraceLabel>
            ))}
          </LabelColumn>
          <OverviewSvg viewBox="306 815 1612 181">
            <defs>
              <clipPath id="selection"><rect x="1151" y="815" width="84" height="181" /></clipPath>
            </defs>
            <g fill="none" shapeRendering="crispEdges">
              <path d={greenOverview} stroke="#06f006" />
              <path d={redOverview} stroke="#f84848" strokeWidth="2" />
              <path d={blueOverview} stroke="#1896f8" />
            </g>
            <rect x="1151" y="815" width="84" height="181" fill="#88f0f0" />
            <g fill="none" shapeRendering="crispEdges" clipPath="url(#selection)">
              <path d={greenOverview} stroke="#8010e8" />
              <path d={redOverview} stroke="#a8b4b4" strokeWidth="2" />
              <path d={blueOverview} stroke="#a06c14" />
            </g>
          </OverviewSvg>
        </Overview>
      </RightColumn>
    </Main>

    <StatusBar>
      <StatusLeft>Vlnovy/Spektralni rezim</StatusLeft>
      <StatusRight>Čas záznamu celkem: 00000:20:36.718.4</StatusRight>
    </StatusBar>
  </Page>
);

export default App;
